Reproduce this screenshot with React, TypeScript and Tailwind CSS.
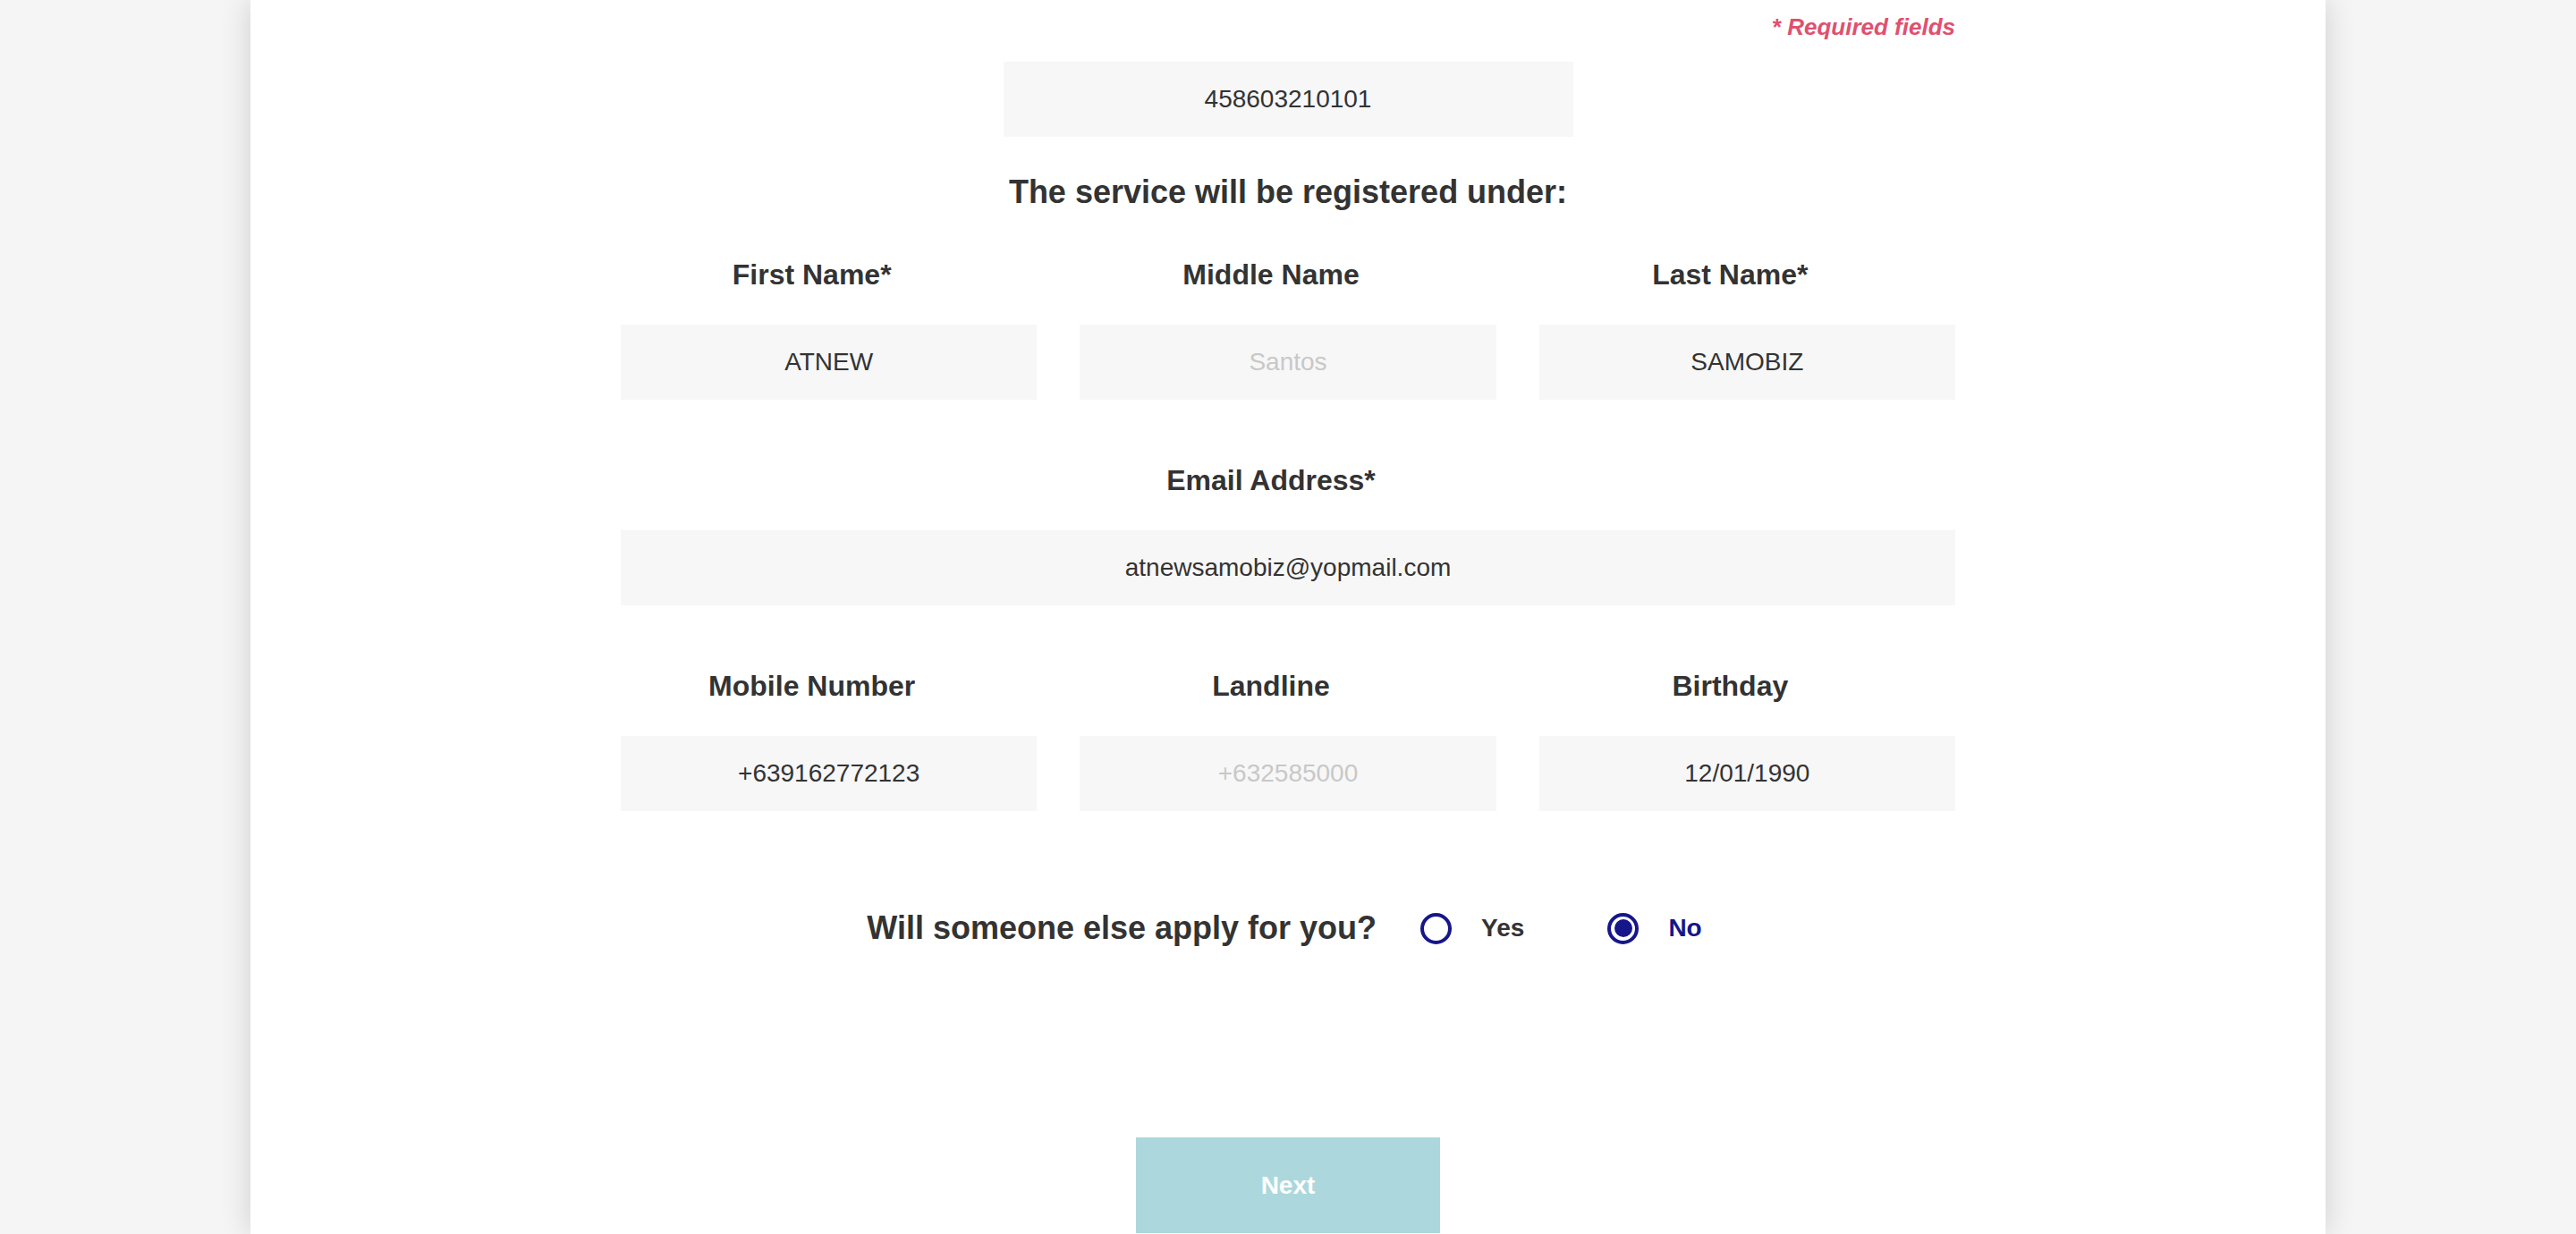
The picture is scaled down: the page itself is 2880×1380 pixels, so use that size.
import { useState } from 'react'

type Field = {
  label: string
  value?: string
  placeholder?: string
}

const nameFields: Field[] = [
  { label: 'First Name*', value: 'ATNEW' },
  { label: 'Middle Name', placeholder: 'Santos' },
  { label: 'Last Name*', value: 'SAMOBIZ' },
]

const contactFields: Field[] = [
  { label: 'Mobile Number', value: '+639162772123' },
  { label: 'Landline', placeholder: '+632585000' },
  { label: 'Birthday', value: '12/01/1990' },
]

function TextInput({ value, placeholder }: { value?: string; placeholder?: string }) {
  return (
    <input
      type="text"
      readOnly
      defaultValue={value}
      placeholder={placeholder}
      className="h-[84px] w-full bg-[#f7f7f7] text-center text-[28px] text-[#333333] outline-none placeholder:text-[#c8c8c8]"
    />
  )
}

function FieldBlock({ field }: { field: Field }) {
  return (
    <div className="flex flex-col">
      <label className="mb-[40px] pr-[38px] text-center text-[32px] font-bold leading-[32px] text-[#333333]">
        {field.label}
      </label>
      <TextInput value={field.value} placeholder={field.placeholder} />
    </div>
  )
}

function Radio({ checked, label, onClick }: { checked: boolean; label: string; onClick: () => void }) {
  return (
    <button type="button" onClick={onClick} className="flex items-center">
      <span className="flex h-[35px] w-[35px] items-center justify-center rounded-full border-[4px] border-[#16168a]">
        {checked && <span className="h-[20px] w-[20px] rounded-full bg-[#16168a]" />}
      </span>
      <span
        className={`ml-[33px] text-[28px] font-bold leading-[28px] ${
          checked ? 'text-[#16168a]' : 'text-[#333333]'
        }`}
      >
        {label}
      </span>
    </button>
  )
}

export default function App() {
  const [someoneElse, setSomeoneElse] = useState<'yes' | 'no'>('no')

  return (
    <div className="flex min-h-screen justify-center bg-[#f5f5f5] font-['Liberation_Sans',Arial,sans-serif]">
      <div className="flex w-[2320px] flex-col items-center bg-white shadow-[0_0_32px_rgba(0,0,0,0.16)]">
        <div className="flex w-[1492px] flex-col">
          <p className="mt-[17px] text-right text-[26px] font-bold italic leading-[26px] text-[#e0506f]">
            * Required fields
          </p>

          <div className="mt-[26px] flex justify-center">
            <input
              type="text"
              readOnly
              defaultValue="458603210101"
              className="h-[84px] w-[637px] bg-[#f7f7f7] text-center text-[28px] text-[#333333] outline-none"
            />
          </div>

          <h2 className="mt-[44px] text-center text-[36px] font-bold leading-[36px] text-[#333333]">
            The service will be registered under:
          </h2>

          <div className="mt-[58px] grid grid-cols-3 gap-x-[48px]">
            {nameFields.map((f) => (
              <FieldBlock key={f.label} field={f} />
            ))}
          </div>

          <div className="mt-[74px]">
            <FieldBlock field={{ label: 'Email Address*', value: 'atnewsamobiz@yopmail.com' }} />
          </div>

          <div className="mt-[74px] grid grid-cols-3 gap-x-[48px]">
            {contactFields.map((f) => (
              <FieldBlock key={f.label} field={f} />
            ))}
          </div>

          {/* Applicant question */}
          <div className="mt-[113px] flex items-center justify-center pr-[8px]">
            <span className="text-[36px] font-bold leading-[36px] text-[#333333]">
              Will someone else apply for you?
            </span>
            <div className="ml-[49px]">
              <Radio checked={someoneElse === 'yes'} label="Yes" onClick={() => setSomeoneElse('yes')} />
            </div>
            <div className="ml-[93px]">
              <Radio checked={someoneElse === 'no'} label="No" onClick={() => setSomeoneElse('no')} />
            </div>
          </div>

          <div className="mt-[216px] flex justify-center">
            <button
              type="button"
              className="h-[107px] w-[340px] bg-[#acd7dc] text-[28px] font-bold text-white"
            >
              Next
            </button>
          </div>
        </div>
      </div>
    </div>
  )
}
